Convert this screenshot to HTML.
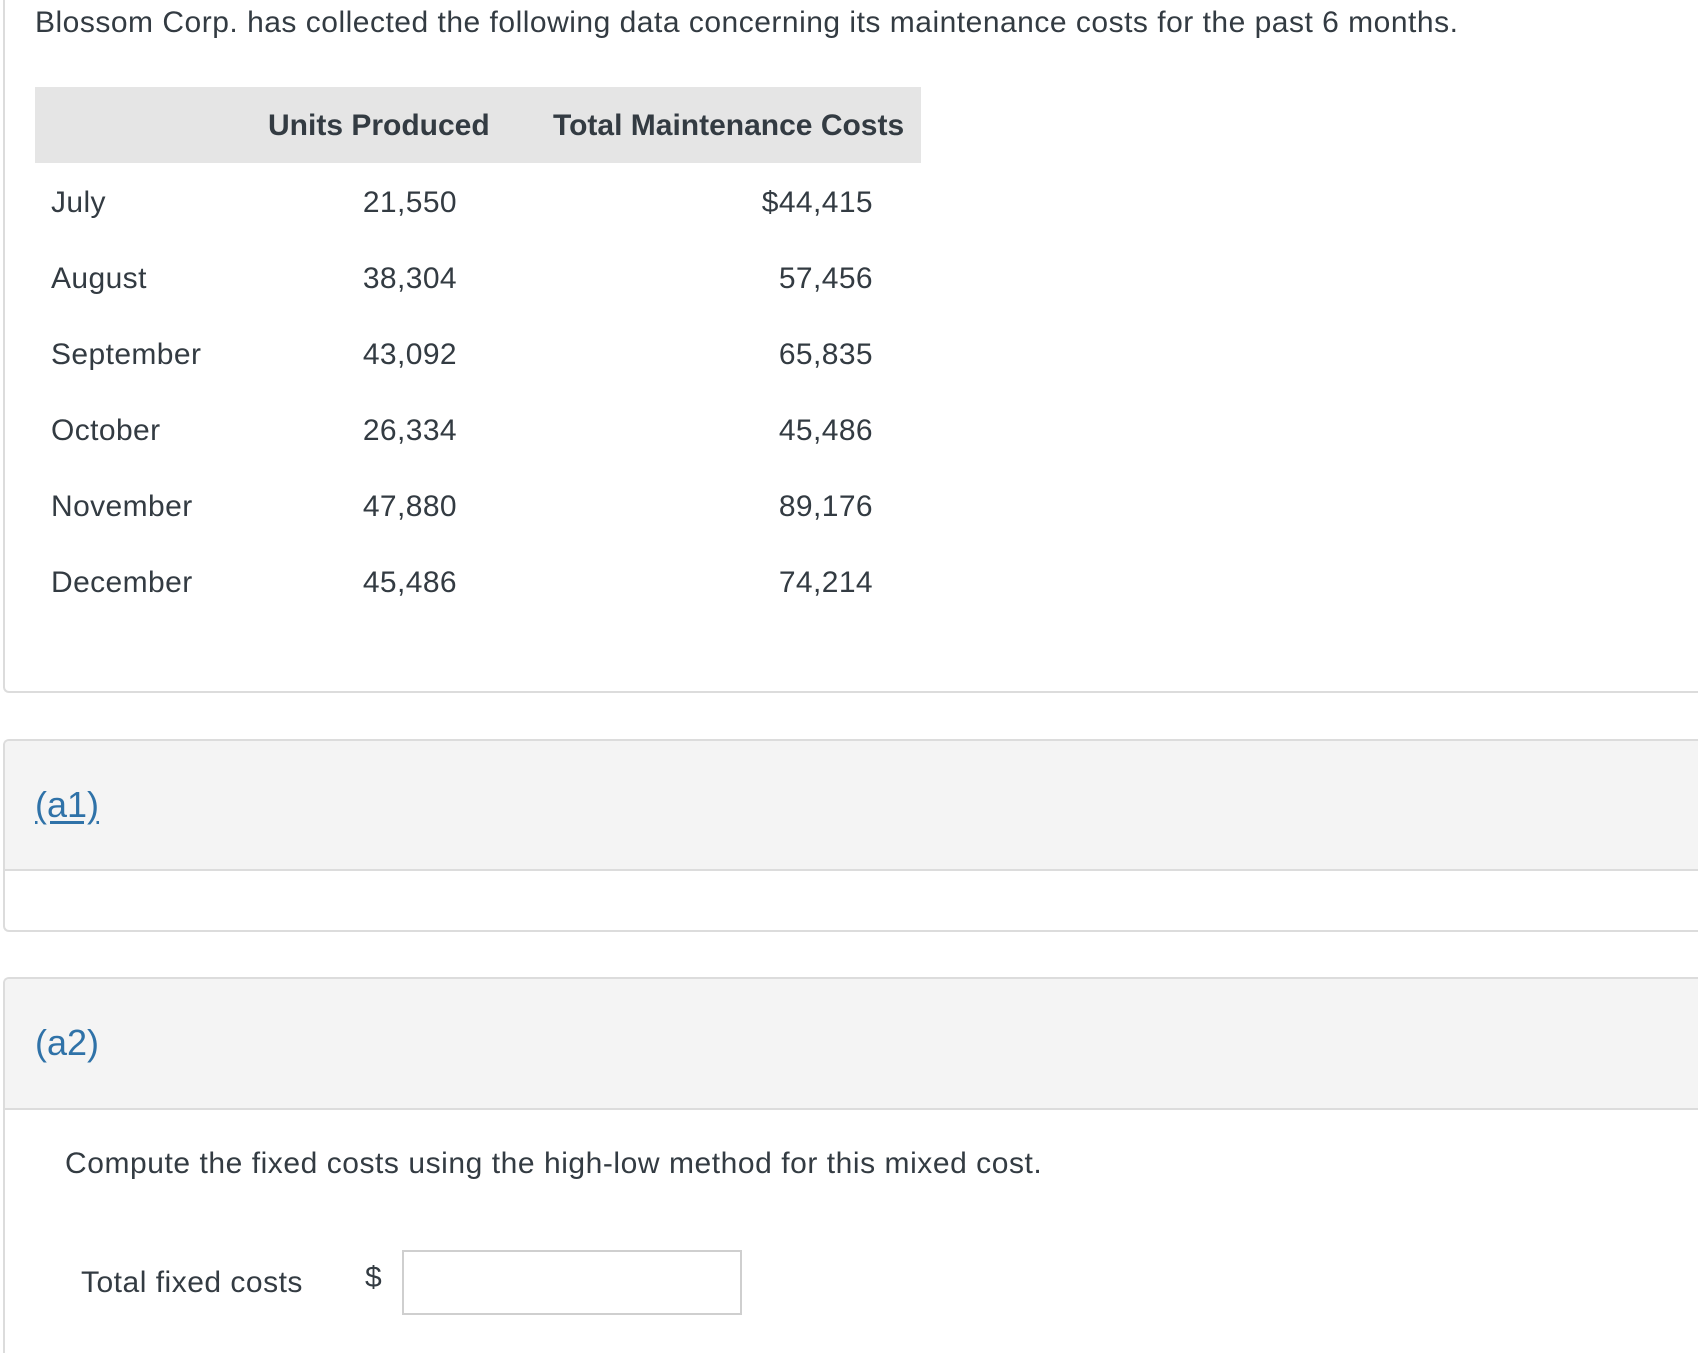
<!DOCTYPE html>
<html><head><meta charset="utf-8"><style>
*{box-sizing:border-box;margin:0;padding:0}
html{width:1698px;height:1353px;overflow:hidden}
body{width:1698px;height:1353px;background:#fff;font-family:"Liberation Sans",sans-serif;color:#333b42;position:relative;overflow:hidden}
.abs{position:absolute;white-space:nowrap}
.card{position:absolute;left:3px;right:0;border:2px solid #dcdcdc;border-right:none;border-radius:6px 0 0 6px;background:#fff}
.t{font-size:30px;line-height:32px;letter-spacing:0.4px}
.r{text-align:right}
</style></head><body>
<div class="card" style="top:0;height:693px;border-top:none;border-radius:0 0 0 6px"></div>
<div class="abs t" style="left:35px;top:7px;letter-spacing:0.5px">Blossom Corp. has collected the following data concerning its maintenance costs for the past 6 months.</div>
<div class="abs" style="left:35px;top:87px;width:886px;height:76px;background:#e5e5e5"></div>
<div class="abs t" style="left:268px;top:110px;font-weight:bold;letter-spacing:0">Units Produced</div>
<div class="abs t" style="left:553px;top:110px;font-weight:bold;letter-spacing:0">Total Maintenance Costs</div>

<div class="abs t" style="left:51px;top:187px">July</div>
<div class="abs t" style="left:51px;top:263px">August</div>
<div class="abs t" style="left:51px;top:339px">September</div>
<div class="abs t" style="left:51px;top:415px">October</div>
<div class="abs t" style="left:51px;top:491px">November</div>
<div class="abs t" style="left:51px;top:567px">December</div>

<div class="abs t r" style="left:300px;width:157px;top:187px">21,550</div>
<div class="abs t r" style="left:300px;width:157px;top:263px">38,304</div>
<div class="abs t r" style="left:300px;width:157px;top:339px">43,092</div>
<div class="abs t r" style="left:300px;width:157px;top:415px">26,334</div>
<div class="abs t r" style="left:300px;width:157px;top:491px">47,880</div>
<div class="abs t r" style="left:300px;width:157px;top:567px">45,486</div>

<div class="abs t r" style="left:700px;width:173px;top:187px">$44,415</div>
<div class="abs t r" style="left:700px;width:173px;top:263px">57,456</div>
<div class="abs t r" style="left:700px;width:173px;top:339px">65,835</div>
<div class="abs t r" style="left:700px;width:173px;top:415px">45,486</div>
<div class="abs t r" style="left:700px;width:173px;top:491px">89,176</div>
<div class="abs t r" style="left:700px;width:173px;top:567px">74,214</div>

<div class="card" style="top:739px;height:193px;overflow:hidden">
  <div style="height:130px;background:#f4f4f4;border-bottom:2px solid #dcdcdc"></div>
</div>
<div class="abs" style="left:35px;top:785px;font-size:36px;line-height:40px;color:#2f72a8;text-decoration:underline;text-underline-offset:4px">(a1)</div>

<div class="card" style="top:977px;height:376px;overflow:hidden;border-bottom:none;border-radius:6px 0 0 0">
  <div style="height:131px;background:#f4f4f4;border-bottom:2px solid #dcdcdc"></div>
</div>
<div class="abs" style="left:35px;top:1023px;font-size:36px;line-height:40px;color:#2f72a8">(a2)</div>
<div class="abs t" style="left:65px;top:1148px;letter-spacing:0.55px">Compute the fixed costs using the high-low method for this mixed cost.</div>
<div class="abs t" style="left:81px;top:1267px;letter-spacing:0.5px">Total fixed costs</div>
<div class="abs t" style="left:365px;top:1262px">$</div>
<div class="abs" style="left:402px;top:1250px;width:340px;height:65px;border:2px solid #cfcfcf;background:#fff"></div>
</body></html>
